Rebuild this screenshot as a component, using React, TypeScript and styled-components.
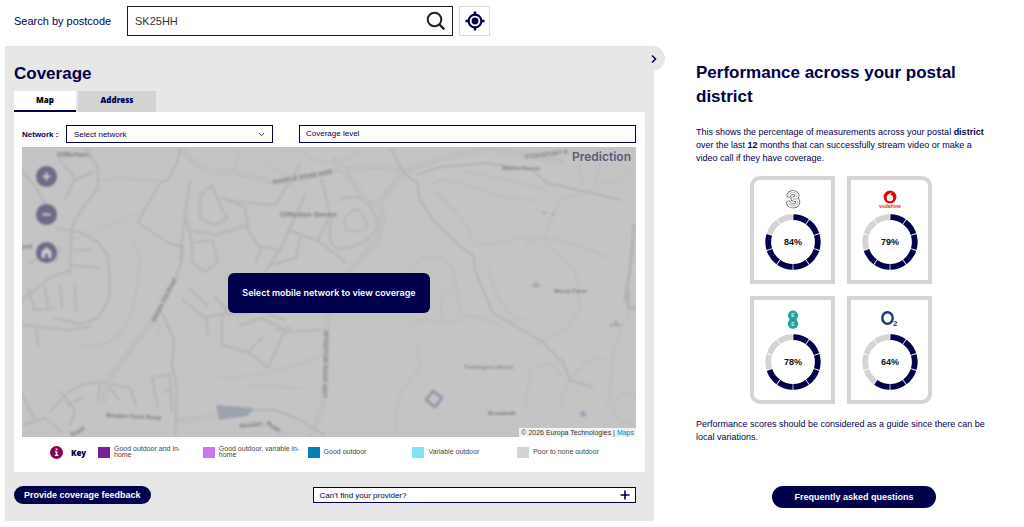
import React from "react";
import styled, { createGlobalStyle } from "styled-components";

const navy = "#00004b";
const sans = `"Liberation Sans", Arial, sans-serif`;
const humanist = `"Noto Sans", "Open Sans", sans-serif`;
const grotesk = `Inter, "Liberation Sans", sans-serif`;

const GlobalStyle = createGlobalStyle`
  *, *::before, *::after { box-sizing: border-box; }
  body { margin: 0; background: #fff; color: ${navy}; font-family: ${sans}; }
  button, input, select { font-family: inherit; color: inherit; margin: 0; }
  button { cursor: pointer; }
  h1, h2, p { margin: 0; }
`;

const Page = styled.div`
  padding: 6px 12px 6px 5px;
`;

const SearchBar = styled.form`
  display: flex;
  align-items: center;
  gap: 6px;
  padding-left: 9px;
  margin-bottom: 10px;
`;

const SearchLabel = styled.label`
  width: 107px;
  font-size: 11px;
  white-space: nowrap;
`;

const SearchField = styled.div`
  display: flex;
  align-items: center;
  width: 326px;
  height: 30px;
  border: 1px solid #1d1d1d;
  background: #fff;
`;

const SearchInput = styled.input`
  flex: 1;
  min-width: 0;
  height: 28px;
  padding: 0 7px;
  border: 0;
  outline: 0;
  background: transparent;
  color: #333;
  font-size: 11px;
`;

const IconButton = styled.button<{ $framed?: boolean }>`
  display: flex;
  align-items: center;
  justify-content: center;
  width: ${(p) => (p.$framed ? 31 : 32)}px;
  height: ${(p) => (p.$framed ? 30 : 28)}px;
  padding: 0;
  border: ${(p) => (p.$framed ? "1px solid #d9d9d9" : "0")};
  background: transparent;
`;

const Columns = styled.main`
  display: grid;
  grid-template-columns: minmax(0, 649fr) minmax(0, 358fr);
  align-items: start;
`;

const Panel = styled.section`
  position: relative;
  padding: 16px 9px 17px;
  background: #e7e7e7;
`;

const CollapseButton = styled.button`
  position: absolute;
  top: 0;
  right: -11px;
  display: flex;
  align-items: center;
  justify-content: center;
  width: 25px;
  height: 25px;
  padding: 0 0 0 3px;
  border: 0;
  border-radius: 50%;
  background: #e7e7e7;
`;

const Heading = styled.h2`
  font-size: 17px;
  line-height: 24px;
  font-weight: 700;
`;

const Tabs = styled.div`
  display: flex;
  gap: 2px;
  margin-top: 5px;
`;

const Tab = styled.button<{ $active?: boolean }>`
  height: 21px;
  width: ${(p) => (p.$active ? 62 : 78)}px;
  padding: 0 0 2px;
  border: 0;
  border-bottom: 2px solid ${(p) => (p.$active ? navy : "#d3d3d3")};
  background: ${(p) => (p.$active ? "#fff" : "#d3d3d3")};
  color: ${(p) => (p.$active ? "#000" : navy)};
  font-family: ${humanist};
  font-size: 8px;
  line-height: 16px;
  font-weight: 900;
`;

const Card = styled.div`
  padding: 13px 9px 5px 8px;
  background: #fff;
`;

const Filters = styled.div`
  display: grid;
  grid-template-columns: 44px minmax(0, 220fr) minmax(0, 350fr);
  align-items: center;
  margin-bottom: 4px;
`;

const FilterLabel = styled.label`
  font-size: 8px;
  font-weight: 700;
`;

const SelectWrap = styled.div`
  position: relative;
  margin-right: 13px;
  svg { position: absolute; right: 8px; top: 6px; pointer-events: none; }
`;

const Select = styled.select`
  display: block;
  width: 100%;
  height: 18px;
  padding: 0 7px;
  border: 1px solid ${navy};
  border-radius: 0;
  appearance: none;
  background: #fff;
  font-size: 8px;
`;

const LevelButton = styled.button`
  height: 18px;
  margin-left: 13px;
  padding: 0 6px 2px;
  border: 1px solid ${navy};
  background: #fff;
  font-size: 8px;
  text-align: left;
`;

const MapFrame = styled.div`
  position: relative;
  height: 290px;
  overflow: hidden;
  background: #c4c4c4;
`;

const MapDrawing = styled.svg`
  display: block;
  width: 100%;
  height: 100%;
`;

const MapControls = styled.div`
  position: absolute;
  top: 19px;
  left: 14px;
  display: flex;
  flex-direction: column;
  gap: 17px;
  filter: blur(1px);
`;

const MapControl = styled.button`
  display: flex;
  align-items: center;
  justify-content: center;
  width: 21px;
  height: 21px;
  padding: 0;
  border: 0;
  border-radius: 50%;
  background: #6e6b88;
`;

const Prediction = styled.span`
  position: absolute;
  top: 2px;
  right: 5px;
  color: #5a577c;
  font-family: ${grotesk};
  font-size: 12px;
  line-height: 16px;
  font-weight: 600;
`;

const MapNotice = styled.div`
  position: absolute;
  inset: 0;
  display: flex;
  align-items: center;
  justify-content: center;
  padding-top: 2px;
  p {
    padding: 0 14px;
    border-radius: 6px;
    background: ${navy};
    color: #fff;
    font-family: ${grotesk};
    font-size: 9px;
    line-height: 40px;
    font-weight: 600;
  }
`;

const Attribution = styled.div`
  position: absolute;
  right: 0;
  bottom: 0;
  padding: 0 2px;
  background: #f2f2f2;
  color: #333;
  font-size: 7px;
  line-height: 9px;
  a { color: #0078a8; text-decoration: none; }
`;

const Legend = styled.div`
  display: grid;
  grid-template-columns: 48px minmax(0, 1fr);
  align-items: center;
  height: 30px;
  padding: 0 14px 0 28px;
`;

const LegendTitle = styled.div`
  display: flex;
  align-items: center;
  gap: 8px;
  font-family: ${humanist};
  font-size: 8px;
  font-weight: 900;
`;

const LegendItems = styled.ul`
  display: grid;
  grid-template-columns: repeat(5, minmax(0, 1fr));
  margin: 0;
  padding: 0;
  list-style: none;
`;

const LegendItem = styled.li`
  display: flex;
  align-items: center;
  gap: 4px;
  color: #444;
  font-size: 7px;
  line-height: 6px;
  span { max-width: 82px; }
`;

const Swatch = styled.i<{ $color: string }>`
  flex: none;
  width: 12px;
  height: 11px;
  background: ${(p) => p.$color};
`;

const PanelFooter = styled.div`
  display: flex;
  align-items: center;
  justify-content: space-between;
  margin-top: 14px;
  padding-right: 9px;
`;

const PillButton = styled.button<{ $large?: boolean }>`
  height: ${(p) => (p.$large ? 22 : 18)}px;
  padding: 0 ${(p) => (p.$large ? 22 : 10)}px;
  border: 0;
  border-radius: 11px;
  background: ${navy};
  color: #fff;
  font-size: 9px;
  font-weight: 700;
`;

const ProviderButton = styled.button`
  display: flex;
  align-items: center;
  justify-content: space-between;
  width: 52%;
  height: 16px;
  padding: 0 5px 0 6px;
  border: 1px solid ${navy};
  background: #fff;
  font-size: 8px;
`;

const Performance = styled.section`
  display: flex;
  flex-direction: column;
  padding: 15px 0 0 42px;
`;

const Copy = styled.p`
  font-size: 9px;
  line-height: 13px;
`;

const Body = styled.div`
  display: flex;
  flex-direction: column;
  gap: 11px;
  max-width: 290px;
  margin: 17px 0 42px;
`;

const Scores = styled.div`
  display: grid;
  grid-template-columns: repeat(2, 85px);
  gap: 12px;
  justify-content: center;
  margin-bottom: 3px;
`;

const ScoreCard = styled.article<{ $radius: string }>`
  display: flex;
  flex-direction: column;
  align-items: center;
  gap: 4px;
  height: 108px;
  padding-top: 10px;
  border: 4px solid #d7d2d4;
  border-radius: ${(p) => p.$radius};
`;

const Centered = styled.div`
  display: flex;
  justify-content: center;
`;

function Ring({ value }: { value: number }) {
  const filled = Math.floor(value / 10);
  return (
    <svg width="56" height="56" viewBox="0 0 56 56" role="img" aria-label={`${value}%`}>
      <g transform="rotate(-90 28 28)" fill="none" strokeWidth="5.8">
        {Array.from({ length: 10 }, (_, i) => (
          <circle
            key={i}
            cx="28"
            cy="28"
            r="24.8"
            pathLength="100"
            stroke={i < filled ? navy : "#d7d2d4"}
            strokeDasharray="9.5 90.5"
            strokeDashoffset={-(i * 10 + 0.25)}
          />
        ))}
      </g>
      <text x="28" y="31" textAnchor="middle" fontFamily="Liberation Sans" fontSize="9" fontWeight="700" fill="#111">
        {value}%
      </text>
    </svg>
  );
}

const threePath = "M4 5.2C4.6 2.4 9.8 1.6 11.6 4.2C13 6.6 11 8.4 8 9C12 8.8 14 11.6 12 14.2C9.8 17 4.4 16.2 3.6 13";

const ThreeLogo = () => (
  <svg width="30" height="20" viewBox="-7 0 30 20" fill="none" strokeLinecap="round" strokeLinejoin="round">
    <path d={threePath} stroke="#555" strokeWidth="4.8" />
    <path d={threePath} stroke="#fff" strokeWidth="3.4" />
    <path d={threePath} stroke="#aaa" strokeWidth="0.8" />
  </svg>
);

const VodafoneLogo = () => (
  <svg width="30" height="20" viewBox="0 0 30 20">
    <circle cx="15" cy="7" r="6.4" fill="#e60000" />
    <path d="M17.6 2.4C14.6 2.8 11.6 5 11.6 8a3.3 3.3 0 1 0 6.6 0c0-1.8-1.3-2.9-2.7-3.3c0-1 0.9-1.8 2.1-2.3z" fill="#fff" />
    <text x="15" y="18" textAnchor="middle" fontFamily="Liberation Sans" fontSize="5" fontWeight="700" fill="#e8303a">
      vodafone
    </text>
  </svg>
);

const EELogo = () => (
  <svg width="30" height="20" viewBox="0 0 30 20">
    <circle cx="15" cy="5.6" r="5" fill="#1fa3a0" />
    <circle cx="15" cy="13.6" r="5.2" fill="#1fa3a0" />
    <g fill="#d8f0ef" fontFamily="Liberation Sans" fontSize="5" fontWeight="700" textAnchor="middle">
      <text x="15" y="7">E</text>
      <text x="15" y="15.6">E</text>
    </g>
  </svg>
);

const O2Logo = () => (
  <svg width="30" height="20" viewBox="0 0 30 20">
    <ellipse cx="12.5" cy="8" rx="5.2" ry="5.8" fill="none" stroke="#1b3a78" strokeWidth="2.4" />
    <text x="18" y="16" fontFamily="Liberation Sans" fontSize="8" fontWeight="700" fill="#1b3a78">
      2
    </text>
  </svg>
);

const providers = [
  { name: "Three", value: 84, Logo: ThreeLogo, radius: "10px 0 0 0" },
  { name: "Vodafone", value: 79, Logo: VodafoneLogo, radius: "0 10px 0 0" },
  { name: "EE", value: 78, Logo: EELogo, radius: "0 0 0 10px" },
  { name: "O2", value: 64, Logo: O2Logo, radius: "0 0 10px 0" },
];

const legend = [
  { color: "#7d1d96", label: "Good outdoor and in-home" },
  { color: "#cd78e8", label: "Good outdoor, variable in-home" },
  { color: "#0081b8", label: "Good outdoor" },
  { color: "#80e4f6", label: "Variable outdoor" },
  { color: "#d3d3d3", label: "Poor to none outdoor" },
];

const mainRoads = [
  "M178 145L188 157L198 165L214 172L235 172L273 182L305 178L338 170L380 166L403 172",
  "M403 172L440 159L465 153L490 149L527 155L560 162",
  "M403 172L393 184L380 203L370 204L358 190L344 170L335 160",
  "M380 203L383 220L377 240L350 270L330 292L327 330L326 380L322 410L310 437",
  "M177 275L152 322L130 350L108 380L104 400",
  "M176 420C190 422 203 418 212 416M245 424C262 420 280 428 290 440",
];

const sideRoads = [
  "M85 147L98 168L98 188L85 205L74 222L71 235L70 275",
  "M57 228L80 232L98 242L108 256L110 280L109 300L98 318L80 324L55 318",
  "M22 170L38 190L50 215M60 160L75 178L66 198M75 180L92 172M22 300L50 278L70 270",
  "M200 195L212 185L222 210L228 218L214 225L200 218L200 195M190 230L215 235L248 225L245 207L222 198",
  "M225 200L250 203L275 205L300 165M245 225L258 246L280 250L305 195M288 230L320 242L345 262",
  "M192 243L212 240L218 262L205 272L192 262ZM185 215L192 243M190 180L185 215L180 260",
  "M280 250L262 275L250 290M300 238L296 258L270 265M322 180L330 215L318 240M262 246L256 262",
  "M183 300L205 318L228 312L215 297M190 290L208 305M222 315L222 345L248 352L268 368L285 330L262 318L240 325",
  "M262 338L250 350M275 330L290 328M285 332L320 330M206 318L208 335M228 315L255 310L285 320",
  "M50 412L68 392L85 384L98 382L130 388L136 405M60 392L75 410L70 425M68 405L82 398M100 384L98 400M110 388L120 400",
  "M22 325L70 330L90 326M36 330L38 345M28 290L35 310L55 308M45 288L48 306M60 286L62 308M75 284L76 310",
  "M152 378L158 408M170 376L172 410M152 378L170 374M165 392L172 390",
  "M22 425L45 418L62 432M22 395L35 420",
  "M75 250L90 250M72 265L100 268M60 248L55 262M30 262L48 255",
];

const faintLines = [
  "M430 185L440 180L460 184M435 190C445 205 465 215 470 235L480 245L530 237L560 240L590 250L608 258",
  "M417 345L420 368L402 390L396 410L395 437M405 330L420 320L455 322L470 315L500 325",
  "M403 275C425 250 450 250 456 280L460 315",
  "M488 265C495 300 510 320 525 320M535 345L565 330L580 310L575 270L548 245",
  "M525 410L530 370L550 362L562 375M610 400L612 360L620 330L630 310M605 400L620 420L636 425",
  "M615 404C620 392 636 390 636 398M560 412C560 390 570 375 590 360L605 358",
  "M70 240C100 230 120 222 138 212M100 180L120 178L162 181",
  "M150 322C160 320 165 330 150 340M82 345C110 350 130 330 135 300L140 260L132 240",
  "M220 378L260 375L285 368L325 355M250 385L300 388M455 285L440 300L442 320",
  "M525 245L545 235L560 200L590 190M600 165L595 185L620 180L630 170M580 165L582 185",
  "M265 160L290 180L300 200M233 172L240 155L236 147M300 147C310 165 340 168 360 150",
  "M455 180C480 190 500 200 540 200M460 170C480 176 520 180 545 190",
];

const rivers = [
  "M180 150L177 163L168 180L162 181L150 200L143 212L138 223L157 235L168 243L183 247L182 260L177 274",
  "M162 313L174 340L172 363L177 390L176 417L175 437",
  "M390 148L397 160L403 172L417 183L420 200L433 220L443 230L460 246L473 255L475 270L487 300L492 312L517 327L540 340L563 362L570 380L593 387",
  "M417 175L440 167L487 163L533 170L547 183L587 192L620 200",
  "M250 410L275 410L300 420L325 435",
];

const MapPicture = () => (
  <MapDrawing viewBox="22 147 614 290" preserveAspectRatio="xMidYMid slice" aria-hidden="true">
    <defs>
      <filter id="soft" x="-5%" y="-5%" width="110%" height="110%">
        <feGaussianBlur stdDeviation="1" />
      </filter>
    </defs>
    <rect x="22" y="147" width="614" height="290" fill="#c4c4c4" />
    <g filter="url(#soft)" fill="none" strokeLinejoin="round" strokeLinecap="round">
      <g stroke="#bbb" strokeWidth="1.4">
        {faintLines.map((d) => <path key={d} d={d} />)}
      </g>
      <g stroke="#b7b7b7" strokeWidth="2.6">
        {sideRoads.map((d) => <path key={d} d={d} />)}
      </g>
      <g stroke="#b0b0b0" strokeWidth="4">
        {mainRoads.map((d) => <path key={d} d={d} />)}
      </g>
      <g stroke="#c8c8c8" strokeWidth="2">
        {mainRoads.map((d) => <path key={d} d={d} />)}
      </g>
      <g stroke="#a9adba" strokeWidth="1.4">
        {rivers.map((d) => <path key={d} d={d} />)}
      </g>
      <path d="M348 215q8-12 16 2t-8 14t-10-14M340 200q22-10 34 12t-20 34t-22-30" stroke="#b7b7b7" strokeWidth="2.4" />
      <path d="M216 405L254 408L248 416L219 420Z" fill="#9da3ae" />
      <path d="M433 391L442 398L435 407L426 400Z" stroke="#939bab" strokeWidth="3" />
      <circle cx="583" cy="414" r="3" fill="#a0a3b8" />
      <g fill="#7c7c7c" fontFamily="Liberation Sans" fontSize="7" fontWeight="700">
        <text x="57" y="157" fontSize="8">Offerton</text>
        <text x="280" y="217" fontSize="8">Offerton Green</text>
        <text x="22" y="249">eet</text>
        <text x="273" y="184" fontSize="6" transform="rotate(-10 273 184)">MARPLE ROAD A626</text>
        <text x="525" y="159" fontSize="6" transform="rotate(-7 525 159)">STOCKPORT R</text>
        <text x="502" y="170" fontSize="6">Manor House</text>
        <text x="554" y="293" fontSize="6">Wood Farm</text>
        <text x="488" y="415" fontSize="6">Broadoak</text>
        <text x="464" y="369" fill="#8d8c78" fontSize="6">Torkington Wood</text>
        <text x="155" y="322" fontSize="6" transform="rotate(-63 155 322)">Marple Old Road</text>
        <text x="324" y="330" fontSize="6" transform="rotate(91 324 330)">OFFERTON ROAD A627</text>
        <text x="106" y="417" fontSize="6" transform="rotate(3 106 417)">Bosden Farm Road</text>
        <text x="72" y="437" fontSize="6" transform="rotate(-30 72 437)">Road</text>
        <text x="240" y="428" fontSize="6" transform="rotate(-6 240 428)">Bosden</text>
        <text x="266" y="424" fontSize="6" transform="rotate(34 266 424)">Road</text>
      </g>
      <path d="M532 286h8M536 282v3M610 325h10M616 320v3M543 213h2M552 214h2" stroke="#999" strokeWidth="1.6" />
      <path d="M628 290v18h8M634 225L630 270L625 300" stroke="#b2b2b2" strokeWidth="3" />
    </g>
  </MapDrawing>
);

export default function App() {
  return (
    <>
      <GlobalStyle />
      <Page>
        <SearchBar onSubmit={(e: React.FormEvent) => e.preventDefault()}>
          <SearchLabel htmlFor="postcode">Search by postcode</SearchLabel>
          <SearchField>
            <SearchInput id="postcode" defaultValue="SK25HH" />
            <IconButton type="submit" aria-label="Search">
              <svg width="20" height="20" viewBox="0 0 20 20" fill="none" stroke="#222" strokeWidth="2">
                <circle cx="8.5" cy="8.5" r="6.8" />
                <path d="M13 13L18.3 18.3" strokeWidth="2.4" />
              </svg>
            </IconButton>
          </SearchField>
          <IconButton $framed type="button" aria-label="Use my location">
            <svg width="20" height="20" viewBox="0 0 20 20" fill="none" stroke={navy}>
              <circle cx="10" cy="10" r="6.4" strokeWidth="2.2" />
              <circle cx="10" cy="10" r="3.4" fill={navy} stroke="none" />
              <path d="M10 0.5V4M10 16V19.5M0.5 10H4M16 10H19.5" strokeWidth="2.4" />
            </svg>
          </IconButton>
        </SearchBar>

        <Columns>
          <Panel>
            <CollapseButton type="button" aria-label="Collapse panel">
              <svg width="8" height="10" viewBox="0 0 8 10" fill="none" stroke={navy} strokeWidth="1.5">
                <path d="M2 1.5L5.6 5L2 8.5" />
              </svg>
            </CollapseButton>
            <Heading>Coverage</Heading>
            <Tabs role="tablist">
              <Tab role="tab" aria-selected="true" $active>Map</Tab>
              <Tab role="tab" aria-selected="false">Address</Tab>
            </Tabs>
            <Card>
              <Filters>
                <FilterLabel htmlFor="network">Network :</FilterLabel>
                <SelectWrap>
                  <Select id="network" defaultValue="">
                    <option value="">Select network</option>
                    {providers.map((p) => <option key={p.name}>{p.name}</option>)}
                  </Select>
                  <svg width="7" height="7" viewBox="0 0 7 7" fill="none" stroke="#444">
                    <path d="M1 2L3.5 4.8L6 2" />
                  </svg>
                </SelectWrap>
                <LevelButton type="button">Coverage level</LevelButton>
              </Filters>
              <MapFrame>
                <MapPicture />
                <MapControls>
                  <MapControl type="button" aria-label="Zoom in">
                    <svg width="11" height="11" viewBox="0 0 11 11" stroke="#c8c8d0" strokeWidth="2.2">
                      <path d="M5.5 1.5V9.5M1.5 5.5H9.5" />
                    </svg>
                  </MapControl>
                  <MapControl type="button" aria-label="Zoom out">
                    <svg width="11" height="11" viewBox="0 0 11 11" stroke="#c8c8d0" strokeWidth="2.2">
                      <path d="M1.5 5.5H9.5" />
                    </svg>
                  </MapControl>
                  <MapControl type="button" aria-label="Reset view">
                    <svg width="13" height="13" viewBox="0 0 13 13">
                      <path d="M1.5 5.5L6.5 1L11.5 5.5V12H8V8H5V12H1.5Z" fill="#c8c8d0" />
                    </svg>
                  </MapControl>
                </MapControls>
                <Prediction>Prediction</Prediction>
                <MapNotice>
                  <p>Select mobile network to view coverage</p>
                </MapNotice>
                <Attribution>
                  © 2026 Europa Technologies | <a href="#maps">Maps</a>
                </Attribution>
              </MapFrame>
              <Legend>
                <LegendTitle>
                  <svg width="13" height="13" viewBox="0 0 13 13">
                    <circle cx="6.5" cy="6.5" r="6.5" fill="#8c0050" />
                    <path d="M5.6 2.6H7.4V4.2H5.6ZM4.9 5.2H7.4V8.8H8.4V10H4.8V8.8H5.8V6.4H4.9Z" fill="#fff" />
                  </svg>
                  Key
                </LegendTitle>
                <LegendItems>
                  {legend.map((item) => (
                    <LegendItem key={item.label}>
                      <Swatch $color={item.color} />
                      <span>{item.label}</span>
                    </LegendItem>
                  ))}
                </LegendItems>
              </Legend>
            </Card>
            <PanelFooter>
              <PillButton type="button">Provide coverage feedback</PillButton>
              <ProviderButton type="button">
                Can't find your provider?
                <svg width="10" height="10" viewBox="0 0 10 10" stroke={navy} strokeWidth="1.6">
                  <path d="M5 0.5V9.5M0.5 5H9.5" />
                </svg>
              </ProviderButton>
            </PanelFooter>
          </Panel>

          <Performance>
            <Heading>Performance across your postal district</Heading>
            <Body>
              <Copy>
                This shows the percentage of measurements across your postal <b>district</b> over the last <b>12</b>{" "}
                months that can successfully stream video or make a video call if they have coverage.
              </Copy>
              <Scores>
                {providers.map(({ name, value, Logo, radius }) => (
                  <ScoreCard key={name} aria-label={name} $radius={radius}>
                    <Logo />
                    <Ring value={value} />
                  </ScoreCard>
                ))}
              </Scores>
              <Copy>Performance scores should be considered as a guide since there can be local variations.</Copy>
            </Body>
            <Centered>
              <PillButton type="button" $large>Frequently asked questions</PillButton>
            </Centered>
          </Performance>
        </Columns>
      </Page>
    </>
  );
}
